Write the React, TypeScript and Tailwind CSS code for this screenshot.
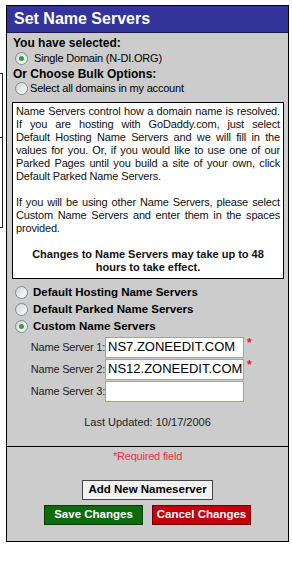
import type { ReactNode } from "react";

function Radio({ checked }: { checked?: boolean }) {
  return (
    <span className="w-[13px] h-[13px] shrink-0 rounded-full border border-[#7f8a99] bg-gradient-to-br from-[#d2d2d2] to-white flex items-center justify-center">
      {checked && <span className="w-[5px] h-[5px] rounded-full bg-[#2ea43a]" />}
    </span>
  );
}

function RadioRow({
  checked,
  bold,
  gap = "gap-[5px]",
  h = "h-[17px]",
  children,
}: {
  checked?: boolean;
  bold?: boolean;
  gap?: string;
  h?: string;
  children: ReactNode;
}) {
  return (
    <div className={`flex items-center pl-[3px] ${h} ${gap}`}>
      <Radio checked={checked} />
      <span className={bold ? "font-bold text-[11.5px]" : "text-[11px] tracking-[-0.2px]"}>{children}</span>
    </div>
  );
}

function ServerRow({ label, value, required }: { label: string; value: string; required?: boolean }) {
  return (
    <div className="flex items-center h-[22px]">
      <span className="w-[93px] text-right text-[11px] tracking-[-0.2px] text-[#222]">{label}</span>
      <div className="w-[139px] h-[21px] bg-white border border-[#a3a887] flex items-center pl-[2px] text-[13px] text-black">
        {value}
      </div>
      {required && <span className="ml-[3px] -mt-[8px] text-[#e02020] text-[12px] font-bold">*</span>}
    </div>
  );
}

export default function App() {
  return (
    <div className="w-[292px] h-[567px] bg-white flex font-['Liberation_Sans',Arial,sans-serif] text-black">
      {/* clipped neighbour column */}
      <div className="w-[6px] shrink-0 pt-[73px]">
        <div className="w-[3px] h-[155px] border-t border-r border-b border-[#222] bg-white flex flex-col">
          <div className="h-[64px] border-b border-[#222]" />
        </div>
      </div>

      <div className="mt-[5px] w-[283px] h-[537px] border border-black flex flex-col bg-[#cccccc]">
        <div className="h-[27px] bg-[#333399] border-b border-[#1a1a4d] flex items-center pl-[7px] text-white font-bold text-[16px]">
          Set Name Servers
        </div>

        <div className="px-[5px] pt-[3px] flex flex-col">
          <div className="font-bold text-[12px] leading-[14px] pl-[1px]">You have selected:</div>
          <RadioRow checked gap="gap-[6px]">Single Domain (N-DI.ORG)</RadioRow>
          <div className="font-bold text-[12px] leading-[14px] pl-[1px]">Or Choose Bulk Options:</div>
          <RadioRow gap="gap-[2px]" h="h-[15px]">Select all domains in my account</RadioRow>

          <div className="mt-[6px] w-[272px] h-[177px] bg-white border border-black px-[3px] pt-[2px] text-[11px] tracking-[-0.15px] leading-[13px] text-[#111]">
            <p className="text-justify">
              Name Servers control how a domain name is resolved. If you are hosting with GoDaddy.com, just select
              Default Hosting Name Servers and we will fill in the values for you. Or, if you would like to use one of
              our Parked Pages until you build a site of your own, click Default Parked Name Servers.
            </p>
            <p className="text-justify mt-[13px]">
              If you will be using other Name Servers, please select Custom Name Servers and enter them in the spaces
              provided.
            </p>
            <p className="mt-[13px] text-center font-bold tracking-normal">
              Changes to Name Servers may take up to 48 hours to take effect.
            </p>
          </div>

          <div className="mt-[5px] flex flex-col">
            <RadioRow bold>Default Hosting Name Servers</RadioRow>
            <RadioRow bold>Default Parked Name Servers</RadioRow>
            <RadioRow bold checked>Custom Name Servers</RadioRow>
          </div>

          <div className="mt-[1px] flex flex-col">
            <ServerRow label="Name Server 1:" value="NS7.ZONEEDIT.COM" required />
            <ServerRow label="Name Server 2:" value="NS12.ZONEEDIT.COM" required />
            <ServerRow label="Name Server 3:" value="" />
          </div>

          <div className="mt-[12px] text-center text-[11px] text-[#222]">Last Updated: 10/17/2006</div>
        </div>

        <div className="mt-[15px] border-t border-black flex flex-col items-center">
          <div className="mt-[1px] text-[11px] tracking-[-0.2px] text-[#e8304a]">*Required field</div>
          <button className="mt-[16px] w-[131px] h-[20px] bg-[#f2f2f2] border border-[#444] font-bold text-[11.5px] text-black">
            Add New Nameserver
          </button>
          <div className="mt-[5px] flex gap-[9px]">
            <button className="w-[99px] h-[20px] bg-[#0c6b0c] border border-[#063d06] font-bold text-[11.5px] text-white">
              Save Changes
            </button>
            <button className="w-[99px] h-[20px] bg-[#c4000c] border border-[#6e0006] font-bold text-[11.5px] text-white">
              Cancel Changes
            </button>
          </div>
        </div>
      </div>
    </div>
  );
}
